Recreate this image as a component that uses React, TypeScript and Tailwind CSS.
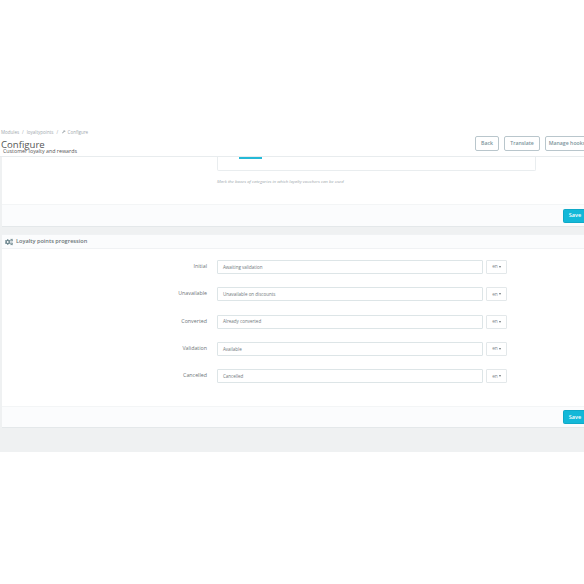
import * as React from "react";
import { FaCogs, FaWrench } from "react-icons/fa";

const rows = [
  { label: "Initial", value: "Awaiting validation" },
  { label: "Unavailable", value: "Unavailable on discounts" },
  { label: "Converted", value: "Already converted" },
  { label: "Validation", value: "Available" },
  { label: "Cancelled", value: "Cancelled" },
];

const SaveBar = ({ height }: { height: string }) => (
  <div className={`flex items-center justify-end bg-[#fbfcfd] border-t border-[#f3f5f6] ${height}`}>
    <button className="h-[14px] w-[24px] -mr-[3px] rounded-[1.5px] bg-[#13b8d8] border border-[#0fa9c7] text-[5.5px] font-semibold text-white">
      Save
    </button>
  </div>
);

const HeaderButton = ({ label, width }: { label: string; width: string }) => (
  <button className={`h-[15px] shrink-0 rounded-[2px] bg-white border border-[#b9c6cc] text-[5.2px] font-semibold text-[#7c939b] ${width}`}>
    {label}
  </button>
);

export default function App() {
  return (
    <div className="w-[584px] h-[584px] overflow-hidden bg-white font-['Open_Sans',sans-serif] antialiased pt-[127px]">
      <header className="relative h-[30px] bg-white border-b border-[#e8ecee] flex items-end justify-end pb-[5px]">
        <div className="absolute left-[1px] top-[2px] flex items-center gap-[2px] text-[4.5px] leading-[6px] text-[#a0a8ad]">
          <span>Modules</span>
          <span className="mx-[1px]">/</span>
          <span>loyaltypoints</span>
          <span className="mx-[1px]">/</span>
          <FaWrench className="w-[3.5px] h-[3.5px] ml-[1px]" />
          <span>Configure</span>
        </div>
        <div className="absolute left-[1px] top-[10px] text-[9.6px] leading-[15px] text-[#555]">Configure</div>
        <div className="absolute left-[3px] top-[20px] text-[5.3px] leading-[9px] text-[#555]">Customer loyalty and rewards</div>
        <div className="flex gap-[5px] w-[109px] overflow-hidden">
          <HeaderButton label="Back" width="w-[24px]" />
          <HeaderButton label="Translate" width="w-[36px]" />
          <HeaderButton label="Manage hooks" width="w-[44px]" />
        </div>
      </header>

      <main className="h-[295px] bg-[#eff1f2] pl-[2px] pb-[24px]">
        <section className="h-[70px] bg-white border-b border-[#e4e8ea] flex flex-col">
          <div className="flex-1 pl-[215px]">
            <div className="w-[319px] h-[14px] bg-white border border-t-0 border-[#e9edef] rounded-b-[2px]">
              <div className="ml-[21px] w-[23px] h-[2px] bg-[#25b9d7]" />
            </div>
            <p className="mt-[7px] text-[4.3px] leading-[6px] italic text-[#a0a8ad]">
              Mark the boxes of categories in which loyalty vouchers can be used
            </p>
          </div>
          <SaveBar height="h-[22px]" />
        </section>

        <section className="mt-[7px] h-[194px] bg-white border-b border-[#e4e8ea] flex flex-col">
          <h2 className="h-[15px] shrink-0 flex items-center gap-[3px] pl-[3px] bg-[#fbfcfd] border-y border-[#f0f2f4] text-[5.6px] font-semibold text-[#6b7478]">
            <FaCogs className="w-[8px] h-[8px] text-[#6c868e]" />
            Loyalty points progression
          </h2>
          <div className="flex-1 pt-[11px] flex flex-col gap-[13.3px]">
            {rows.map((row) => (
              <div key={row.label} className="flex items-start">
                <label className="w-[205px] pt-[1px] text-right text-[5.3px] leading-[10px] text-[#6d7478]">{row.label}</label>
                <div className="ml-[10px] w-[266px] h-[14px] flex items-center pl-[5px] bg-white border border-[#dde5e7] rounded-[1px] text-[4.5px] text-[#6f787c]">
                  {row.value}
                </div>
                <button className="ml-[3px] w-[21px] h-[14px] flex items-center justify-center gap-[1px] bg-white border border-[#e3e8ea] rounded-[1px] text-[4.8px] text-[#7d868a]">
                  en
                  <span className="w-0 h-0 border-x-[1.5px] border-x-transparent border-t-[2px] border-t-[#6c7478]" />
                </button>
              </div>
            ))}
          </div>
          <SaveBar height="h-[21px]" />
        </section>
      </main>
    </div>
  );
}
